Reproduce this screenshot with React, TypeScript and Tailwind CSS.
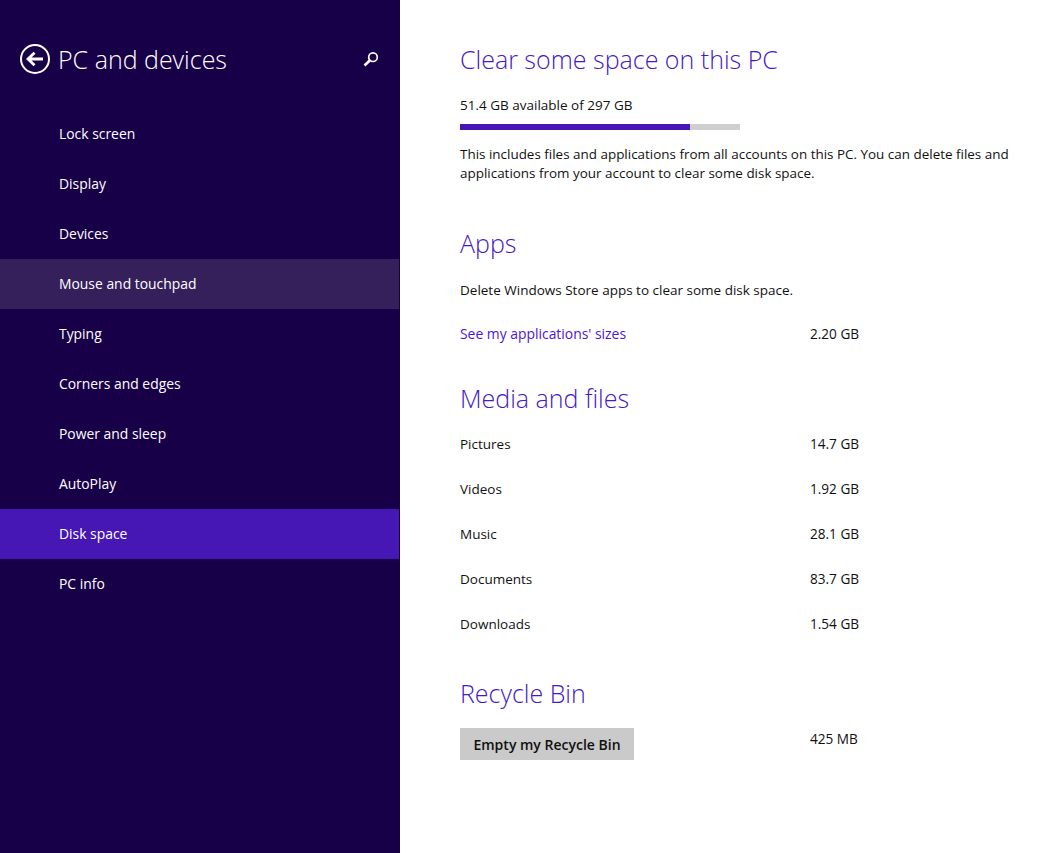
import React from 'react';

const navItems = [
  'Lock screen',
  'Display',
  'Devices',
  'Mouse and touchpad',
  'Typing',
  'Corners and edges',
  'Power and sleep',
  'AutoPlay',
  'Disk space',
  'PC info',
];

const mediaRows = [
  ['Pictures', '14.7 GB'],
  ['Videos', '1.92 GB'],
  ['Music', '28.1 GB'],
  ['Documents', '83.7 GB'],
  ['Downloads', '1.54 GB'],
];

const Heading = ({ children, className }: { children: React.ReactNode; className: string }) => (
  <h2 className={`h-[40px] text-[25px] leading-[40px] font-light text-[#4419c8] ${className}`}>{children}</h2>
);

export default function App() {
  return (
    <div className="flex h-[853px] w-[1043px] overflow-hidden bg-white font-['Open_Sans',sans-serif] text-[13.5px] text-[#111]">
      <aside className="h-full w-[400px] shrink-0 bg-[#180048] text-[13.9px] text-white">
        <header className="flex h-[109px] items-start pt-[39px] pl-[20px] pr-[20px]">
          <svg width="30" height="30" viewBox="0 0 30 30" fill="none" stroke="white" className="mt-[5px] shrink-0">
            <circle cx="15" cy="15" r="14" strokeWidth="2" />
            <path d="M23 15H9M14.5 8.8L8 15L14.5 21.2" strokeWidth="2.8" />
          </svg>
          <h1 className="ml-[8px] text-[25px] leading-[40px] font-light">PC and devices</h1>
          <svg width="18" height="18" viewBox="0 0 18 18" fill="none" stroke="white" className="mt-[11px] ml-auto">
            <circle cx="11" cy="7.2" r="4.3" strokeWidth="1.7" />
            <path d="M8 10.3L2.5 15.5" strokeWidth="2.6" />
          </svg>
        </header>
        <nav>
          {navItems.map((item) => (
            <div
              key={item}
              className={`flex h-[50px] items-center pl-[59px] ${
                item === 'Disk space'
                  ? 'mr-px bg-[#4617b4]'
                  : item === 'Mouse and touchpad'
                    ? 'mr-px bg-[#35205c]'
                    : ''
              }`}
            >
              {item}
            </div>
          ))}
        </nav>
      </aside>

      <main className="min-w-0 flex-1 pl-[60px] pt-[39px]">
        <Heading className="">Clear some space on this PC</Heading>
        <p className="mt-[16px] leading-[20px]">51.4 GB available of 297 GB</p>
        <div className="mt-[9px] h-[6px] w-[280px] bg-[#cfcfcf]">
          <div className="h-full w-[230px] bg-[#4617b4]" />
        </div>
        <p className="mt-[15px] w-[560px] text-[13.45px] leading-[19px]">
          This includes files and applications from all accounts on this PC. You can delete files and applications from
          your account to clear some disk space.
        </p>

        <Heading className="mt-[40px]">Apps</Heading>
        <p className="mt-[17px] leading-[20px]">Delete Windows Store apps to clear some disk space.</p>
        <div className="mt-[24px] flex leading-[20px]">
          <a className="w-[350px] text-[13.9px] text-[#4b14dc]">See my applications' sizes</a>
          <span className="text-[13.6px]">2.20 GB</span>
        </div>

        <Heading className="mt-[34px]">Media and files</Heading>
        <div className="mt-[4px]">
          {mediaRows.map(([name, size]) => (
            <div key={name} className="flex h-[45px] items-center">
              <span className="w-[350px]">{name}</span>
              <span className="text-[13.6px]">{size}</span>
            </div>
          ))}
        </div>

        <Heading className="mt-[26px]">Recycle Bin</Heading>
        <div className="mt-[15px] flex items-start">
          <div className="w-[350px]">
            <button className="h-[32px] w-[174px] bg-[#cacaca] text-[14px] font-semibold text-[#111]">
              Empty my Recycle Bin
            </button>
          </div>
          <span className="mt-px text-[13.6px] leading-[20px]">425 MB</span>
        </div>
      </main>
    </div>
  );
}
